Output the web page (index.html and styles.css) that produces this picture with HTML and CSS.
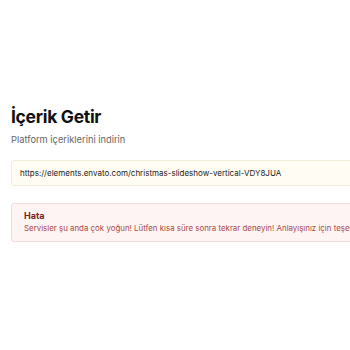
FILE: index.html
```html
<!DOCTYPE html>
<html lang="tr">
<head>
<meta charset="utf-8">
<link rel="stylesheet" href="styles.css">
</head>
<body>
<main class="page">
  <h1 class="title">İçerik Getir</h1>
  <p class="subtitle">Platform içeriklerini indirin</p>
  <div class="url-box">https://elements.envato.com/christmas-slideshow-vertical-VDY8JUA</div>
  <div class="error">
    <div class="error-title">Hata</div>
    <div class="error-text">Servisler şu anda çok yoğun! Lütfen kısa süre sonra tekrar deneyin! Anlayışınız için teşekkür ederiz.</div>
  </div>
</main>
</body>
</html>
```
FILE: styles.css
```css
html, body {
  margin: 0;
  padding: 0;
  background: #ffffff;
  overflow: hidden;
}
body {
  font-family: Inter, "Noto Sans", sans-serif;
  width: 350px;
  height: 350px;
}
.page {
  padding: 105px 0 0 11px;
  width: 420px;
}
.title {
  margin: 0;
  font-size: 17.5px;
  font-weight: 700;
  line-height: 24px;
  color: #111111;
  letter-spacing: -0.3px;
}
.subtitle {
  margin: 4px 0 0;
  font-size: 9.3px;
  line-height: 14px;
  color: #666666;
}
.url-box {
  margin-top: 13px;
  height: 26px;
  box-sizing: border-box;
  padding: 0 8px;
  display: flex;
  align-items: center;
  background: #fffdf3;
  border: 1px solid #efedd9;
  border-radius: 3px;
  font-size: 8px;
  color: #222222;
  white-space: nowrap;
}
.error {
  margin-top: 17px;
  box-sizing: border-box;
  height: 39px;
  padding: 6px 12px;
  background: #fef4f4;
  border: 1px solid #f3d9d9;
  border-radius: 3px;
  white-space: nowrap;
}
.error-title {
  font-size: 9px;
  font-weight: 700;
  line-height: 12px;
  color: #7a1f1f;
}
.error-text {
  font-size: 7.9px;
  line-height: 12px;
  color: #a94a43;
}
```
